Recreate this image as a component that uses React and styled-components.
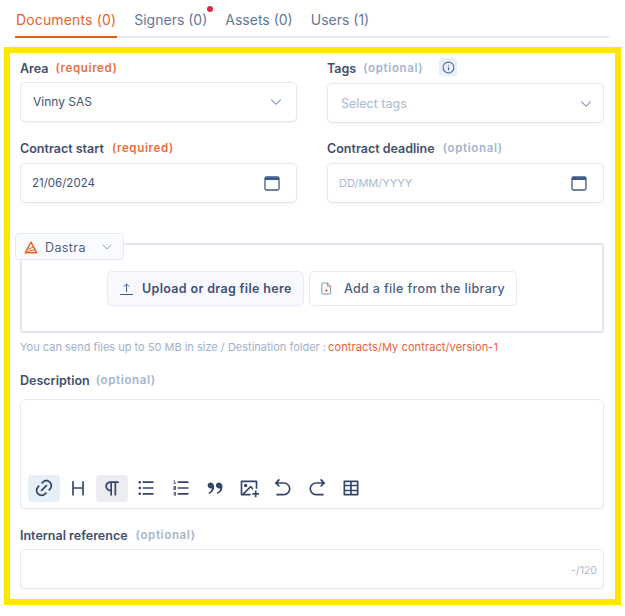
import React from 'react'
import styled, { createGlobalStyle } from 'styled-components'
import { Info, ChevronDown } from 'lucide-react'
import {
  RiLink,
  RiHeading,
  RiParagraph,
  RiListUnordered,
  RiListOrdered,
  RiDoubleQuotesR,
  RiImageAddLine,
  RiArrowGoBackLine,
  RiArrowGoForwardLine,
  RiTable2,
} from 'react-icons/ri'

const GlobalStyle = createGlobalStyle`
  body {
    margin: 0;
    background: #fff;
    font-family: Inter, "Open Sans", sans-serif;
    color: #3f4f6f;
  }
`

const Page = styled.div`
  width: 625px;
  height: 616px;
  overflow: hidden;
`

const Tabs = styled.div`
  display: flex;
  gap: 16px;
  margin: 0 16px 0 15px;
  height: 38px;
  box-sizing: border-box;
  border-bottom: 2px solid #e2e8f0;
`

const Tab = styled.div`
  position: relative;
  height: 38px;
  box-sizing: border-box;
  padding: 11px 1px 0;
  font-size: 14px;
  line-height: 17px;
  letter-spacing: ${p => (p.$active ? 0.15 : 0)}px;
  color: ${p => (p.$active ? '#e8622c' : '#64779a')};
  border-bottom: 2px solid ${p => (p.$active ? '#e25c16' : 'transparent')};
`

const Dot = styled.span`
  position: absolute;
  top: 6px;
  right: -5px;
  width: 6px;
  height: 6px;
  border-radius: 50%;
  background: #dc2645;
`

const Frame = styled.div`
  margin: 9px 0 0 4px;
  width: 617px;
  height: 558px;
  box-sizing: border-box;
  border: 6px solid #ffe600;
  padding: 7px 11px 0 10px;
`

const Grid = styled.div`
  display: grid;
  grid-template-columns: 277px 277px;
  column-gap: 30px;
  row-gap: 17px;
`

const LabelRow = styled.div`
  display: flex;
  align-items: center;
  height: 16px;
  margin-bottom: ${p => p.$gap ?? 6}px;
  font-size: 12.5px;
  font-weight: 600;
  color: #3f4f6f;
`

const Hint = styled.span`
  margin-left: ${p => p.$left ?? 8}px;
  font-size: 11.5px;
  font-weight: 600;
  letter-spacing: 0.65px;
  color: ${p => (p.$required ? '#e8703a' : '#a3b4d0')};
`

const InfoBadge = styled.span`
  display: flex;
  align-items: center;
  justify-content: center;
  width: 18px;
  height: 18px;
  margin: -2px 0 0 16px;
  border-radius: 4px;
  background: #e8eff7;
  color: #52688f;
`

const Control = styled.div`
  display: flex;
  align-items: center;
  justify-content: space-between;
  box-sizing: border-box;
  height: 40px;
  padding: ${p => p.$nudge ?? 0}px ${p => p.$right ?? 15}px 0 ${p => p.$left ?? 12}px;
  background: #fff;
  border: 1px solid #e3e8f3;
  border-radius: 5px;
  box-shadow: 0 1px 2px rgba(100, 116, 160, 0.08);
  font-size: ${p => p.$size ?? 12.5}px;
  color: ${p => (p.$muted ? '#a9b8d2' : '#3f5378')};
`

const ControlText = styled.span`
  margin-bottom: 2px;
`

const Chevron = styled(ChevronDown)`
  color: #95a5c0;
  flex: none;
`

const UploadSection = styled.div`
  position: relative;
  margin-top: 40px;
`

const UploadBox = styled.div`
  display: flex;
  align-items: center;
  justify-content: center;
  gap: 5px;
  box-sizing: border-box;
  height: 90px;
  padding-top: 1px;
  width: 584px;
  border: 2px solid #e1e6ef;
  border-radius: 3px;
`

const Selector = styled.div`
  position: absolute;
  top: -10px;
  left: -5px;
  display: flex;
  align-items: center;
  box-sizing: border-box;
  width: 109px;
  height: 27px;
  padding: 1px 8px 0 8px;
  gap: 7px;
  background: #fafbff;
  border: 1px solid #e3e8f3;
  border-radius: 4px;
  font-size: 12.5px;
  letter-spacing: 0.4px;
  color: #4f6080;
`

const SelectorName = styled.span`
  flex: 1;
`

const FileButton = styled.div`
  display: flex;
  align-items: center;
  gap: ${p => (p.$primary ? 8 : 12)}px;
  box-sizing: border-box;
  height: 35px;
  padding: 0 11px;
  width: ${p => p.$width}px;
  border: 1px solid #e6ebf5;
  border-radius: 5px;
  background: ${p => (p.$primary ? '#f8f9ff' : '#fff')};
  font-size: 12.5px;
  letter-spacing: ${p => (p.$primary ? 0.33 : 0.35)}px;
  font-weight: ${p => (p.$primary ? 600 : 500)};
  color: ${p => (p.$primary ? '#3f5075' : '#4b5e83')};
  white-space: nowrap;
`

const UploadNote = styled.div`
  margin-top: 6px;
  height: 16px;
  font-size: 11px;
  line-height: 16px;
  color: #a1b0cb;
  white-space: nowrap;
`

const Path = styled.span`
  color: #e8623a;
  letter-spacing: 0.1px;
  margin-left: -1px;
`

const Editor = styled.div`
  display: flex;
  align-items: flex-end;
  box-sizing: border-box;
  height: 110px;
  width: 584px;
  padding: 0 0 6px 7px;
  border: 1px solid #e3e8f3;
  border-radius: 5px;
  box-shadow: 0 1px 2px rgba(100, 116, 160, 0.08);
`

const Tools = styled.div`
  display: flex;
  gap: 2.15px;
`

const Tool = styled.span`
  display: flex;
  align-items: center;
  justify-content: center;
  width: 32px;
  height: 27px;
  padding-bottom: 2px;
  box-sizing: border-box;
  border-radius: 4px;
  color: #33466a;
  background: ${p => (p.$tone === 'blue' ? '#e7eff7' : p.$tone === 'grey' ? '#ebedf0' : 'transparent')};
`

const CountInput = styled(Control)`
  align-items: flex-end;
  justify-content: flex-end;
  padding: 0 6px 11px 0;
  font-size: 10.5px;
  color: #a9b8d2;
`

const Section = styled.div`
  margin-top: ${p => p.$top}px;
`

const Calendar = () => (
  <svg width="16" height="16" viewBox="0 0 16 16" fill="none">
    <rect x="1" y="2" width="14" height="13" rx="1.5" stroke="#3f5a86" strokeWidth="1.3" />
    <path d="M1 3.6h14" stroke="#3f5a86" strokeWidth="2.8" />
  </svg>
)

const UploadIcon = () => (
  <svg width="15" height="14" viewBox="0 0 15 14" fill="none" stroke="#4a5f86" strokeWidth="1">
    <path d="M7.5 10V2M4.8 4.6l2.7-2.7 2.7 2.7" />
    <path d="M1 12.5h13" />
  </svg>
)

const FileIcon = () => (
  <svg width="13" height="15" viewBox="0 0 13 15" fill="none" stroke="#6b7fa3" strokeWidth="1">
    <path d="M1.8 1h6l3.7 3.7v8.5a.8.8 0 0 1-.8.8H1.8a.8.8 0 0 1-.8-.8V1.8a.8.8 0 0 1 .8-.8z" />
    <path d="M7.8 1v3.7h3.7" stroke="#e0603a" />
    <path d="M6.3 8v3.6M4.5 9.8h3.6" stroke="#e0603a" />
  </svg>
)

const DastraLogo = () => (
  <svg width="14" height="13" viewBox="0 0 14 13" fill="none" stroke="#e8621c" strokeWidth="1.4">
    <path d="M7 1.2L1.2 11.8h11.6z" strokeLinejoin="round" />
    <path d="M4.2 8.2L9.6 6M3.2 10.4l8.4-1.8" strokeWidth="1" />
  </svg>
)

const toolbar = [
  { Icon: RiLink, tone: 'blue' },
  { Icon: RiHeading },
  { Icon: RiParagraph, tone: 'grey' },
  { Icon: RiListUnordered },
  { Icon: RiListOrdered },
  { Icon: RiDoubleQuotesR },
  { Icon: RiImageAddLine },
  { Icon: RiArrowGoBackLine },
  { Icon: RiArrowGoForwardLine },
  { Icon: RiTable2 },
]

export default function App() {
  return (
    <Page>
      <GlobalStyle />
      <Tabs>
        <Tab $active>Documents (0)</Tab>
        <Tab>Signers (0)<Dot /></Tab>
        <Tab>Assets (0)</Tab>
        <Tab>Users (1)</Tab>
      </Tabs>
      <Frame>
        <Grid>
          <div>
            <LabelRow>Area<Hint $required $left={7}>(required)</Hint></LabelRow>
            <Control $size={12} $right={11}>
              <ControlText>Vinny SAS</ControlText>
              <Chevron size={18} strokeWidth={1.5} />
            </Control>
          </div>
          <div>
            <LabelRow $gap={7}>
              Tags<Hint $left={7}>(optional)</Hint>
              <InfoBadge><Info size={13} /></InfoBadge>
            </LabelRow>
            <Control $muted $left={13} $right={8} $nudge={1}>
              Select tags<Chevron size={18} strokeWidth={1.5} />
            </Control>
          </div>
          <div>
            <LabelRow $gap={7}>Contract start<Hint $required>(required)</Hint></LabelRow>
            <Control $size={11.5} $left={11} $right={16}>21/06/2024<Calendar /></Control>
          </div>
          <div>
            <LabelRow $gap={7}>Contract deadline<Hint>(optional)</Hint></LabelRow>
            <Control $muted $size={11} $left={11} $right={16}>DD/MM/YYYY<Calendar /></Control>
          </div>
        </Grid>

        <UploadSection>
          <Selector>
            <DastraLogo />
            <SelectorName>Dastra</SelectorName>
            <Chevron size={16} strokeWidth={1.5} />
          </Selector>
          <UploadBox>
            <FileButton $primary $width={197}><UploadIcon />Upload or drag file here</FileButton>
            <FileButton $width={208}><FileIcon />Add a file from the library</FileButton>
          </UploadBox>
        </UploadSection>
        <UploadNote>
          You can send files up to 50 MB in size / Destination folder : <Path>contracts/My contract/version-1</Path>
        </UploadNote>

        <Section $top={17}>
          <LabelRow $gap={11}>Description<Hint $left={6}>(optional)</Hint></LabelRow>
          <Editor>
            <Tools>
              {toolbar.map(({ Icon, tone }, i) => (
                <Tool key={i} $tone={tone}><Icon size={20} /></Tool>
              ))}
            </Tools>
          </Editor>
        </Section>

        <Section $top={18}>
          <LabelRow>Internal reference<Hint>(optional)</Hint></LabelRow>
          <CountInput>-/120</CountInput>
        </Section>
      </Frame>
    </Page>
  )
}
